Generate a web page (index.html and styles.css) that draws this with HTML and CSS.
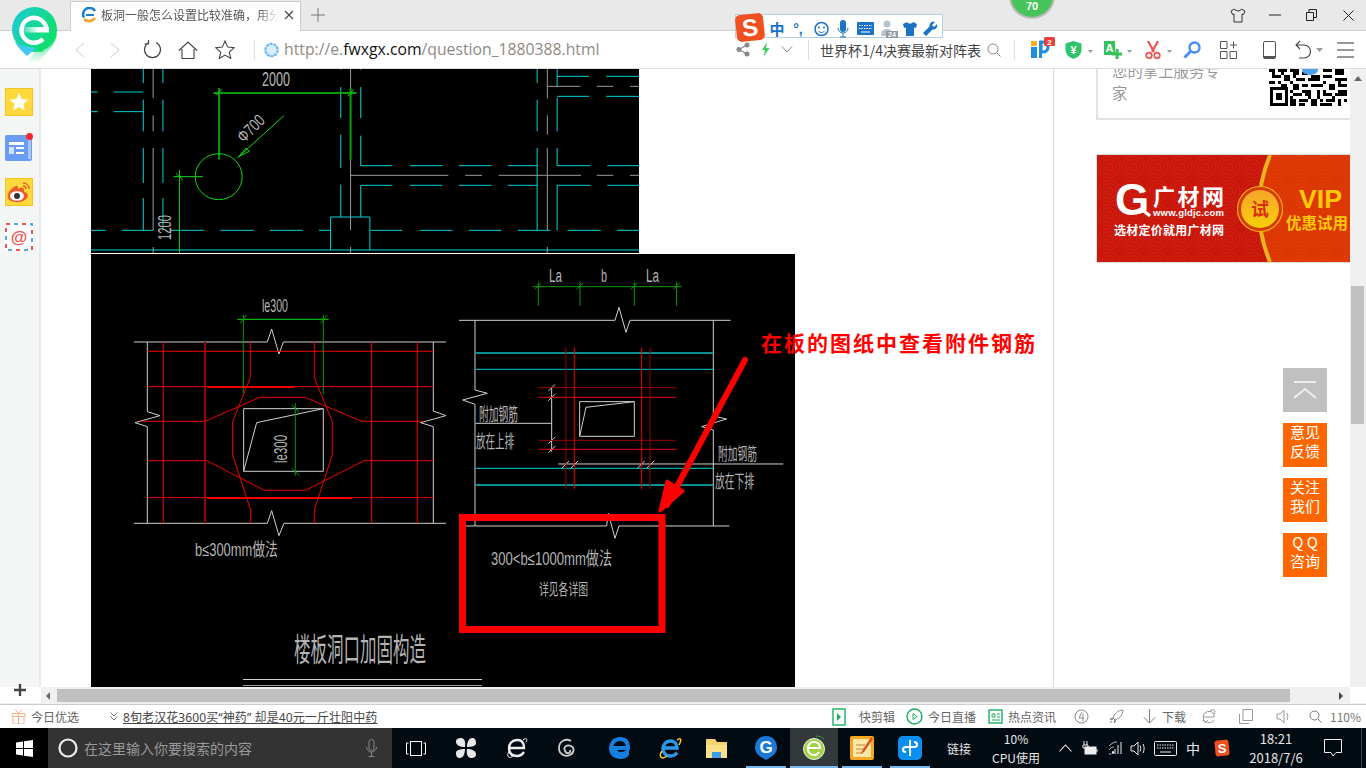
FILE: index.html
```html
<!DOCTYPE html>
<html lang="zh-CN">
<head>
<meta charset="utf-8">
<title>板洞一般怎么设置比较准确</title>
<link rel="stylesheet" href="styles.css">
</head>
<body>
<div class="browser">
  <header class="titlebar">
    <div class="tab">
      <svg class="favicon" width="16" height="16" viewBox="0 0 16 16"><path d="M3 10.500A6 6 0 0 1 14 4" fill="none" stroke="#1a7fd0" stroke-width="2.600"/><path d="M3 12c3 3 8 3 11-1" fill="none" stroke="#f0a030" stroke-width="2.600"/><path d="M5 8h8" stroke="#1a7fd0" stroke-width="2"/></svg>
      <span class="tab-title">板洞一般怎么设置比较准确，用分</span>
      <svg class="tab-close" width="10" height="10" viewBox="0 0 10 10"><path d="M1 1l8 8M9 1l-8 8" stroke="#444" stroke-width="1.100"/></svg>
    </div>
    <svg class="newtab" width="14" height="14" viewBox="0 0 14 14"><path d="M7 0v14M0 7h14" stroke="#777" stroke-width="1"/></svg>
    <div class="winctrls">
      <span class="wc"><svg width="16" height="15" viewBox="0 0 16 15"><path d="M4.500 1L1 3l1.500 3.500L4 6v8h8V6l1.500.5L15 3l-3.500-2c-1 2.500-6 2.500-7 0z" fill="none" stroke="#333"/></svg></span>
      <span class="wc"><svg width="12" height="2" viewBox="0 0 12 2"><path d="M0 1h12" stroke="#222"/></svg></span>
      <span class="wc"><svg width="11" height="12" viewBox="0 0 11 12"><path d="M.5 3.500h7v8h-7zM3 3.500V.5h7.500v8H7.500" fill="none" stroke="#222"/></svg></span>
      <span class="wc"><svg width="11" height="11" viewBox="0 0 11 11"><path d="M.5.500l10 10M10.500.5l-10 10" stroke="#222"/></svg></span>
    </div>
  </header>

  <nav class="toolbar">
    <span class="cell"><svg width="10" height="16" viewBox="0 0 10 16"><path d="M9 1L1 8l8 7" fill="none" stroke="#ccc"/></svg></span>
    <span class="cell"><svg width="10" height="16" viewBox="0 0 10 16"><path d="M1 1l8 7-8 7" fill="none" stroke="#ccc"/></svg></span>
    <span class="cell"><svg width="19" height="19" viewBox="0 0 19 19"><path d="M6 2.500a8 8 0 1 0 7 0M5.500 0v4h-4" fill="none" stroke="#444" stroke-width="1.200"/></svg></span>
    <span class="cell"><svg width="20" height="18" viewBox="0 0 20 18"><path d="M1 9.500L10 1l9 8.500M4 8v9.500h12V8" fill="none" stroke="#444" stroke-width="1.100"/></svg></span>
    <span class="cell"><svg width="20" height="19" viewBox="0 0 20 19"><path d="M10 1l2.700 6.100 6.600.6-5 4.400 1.500 6.400-5.800-3.400-5.800 3.400 1.500-6.400-5-4.400 6.600-.6z" fill="none" stroke="#444" stroke-width="1.100"/></svg></span>
    <span class="cell"><i class="sep"></i></span>
    <span class="cell"><svg width="15" height="16" viewBox="0 0 15 16"><circle cx="7.500" cy="8" r="6.200" fill="#d8eefb" stroke="#66b5ee" stroke-width="2" stroke-dasharray="3 .8"/></svg></span>
    <span class="url">http://e.<b class="url-host">fwxgx.com</b>/question_1880388.html</span>
    <span class="cell"><svg width="14" height="15" viewBox="0 0 14 15"><path d="M3 7.500L11 3M3 7.500l8 4.500" stroke="#888" stroke-width="1.200"/><circle cx="3" cy="7.500" r="2.500" fill="#888"/><circle cx="11" cy="3" r="2.500" fill="#888"/><circle cx="11" cy="12" r="2.500" fill="#888"/></svg></span>
    <span class="cell"><svg width="9" height="15" viewBox="0 0 9 15"><path d="M6 0L1 8h3l-1.500 7L8.500 6H5z" fill="#3ecf5e"/></svg></span>
    <span class="cell"><svg width="12" height="7" viewBox="0 0 12 7"><path d="M1 .5l5 5.500 5-5.500" fill="none" stroke="#888"/></svg></span>
    <span class="cell"><i class="sep"></i></span>
    <span class="search">世界杯1/4决赛最新对阵表</span>
    <span class="cell"><svg width="14" height="14" viewBox="0 0 14 14"><circle cx="6" cy="6" r="5" fill="none" stroke="#888"/><path d="M10 10l3.500 3.500" stroke="#888"/></svg></span>
    <span class="cell"><i class="sep"></i></span>
    <span class="cell cell-ip"><svg width="25" height="26" viewBox="0 0 25 26"><rect x="0" y="4" width="6" height="5" fill="#f3b01c"/><rect x="0" y="10" width="6" height="11" fill="#1e8fe0"/><path d="M10 5h2a5 5 0 0 1 0 10h-2z" fill="none" stroke="#1e8fe0" stroke-width="3.200"/><path d="M9.500 4v17" stroke="#1e8fe0" stroke-width="3"/><rect x="13" y="0" width="11" height="9" rx="1.500" fill="#e8413a"/><text x="18.500" y="7.800" class="badge-num">2</text></svg></span>
    <span class="cell cell-left cell-p11"><svg width="28" height="18" viewBox="0 0 28 18"><path d="M8.500 0l8 2.500V9c0 4.500-4 7.500-8 9-4-1.500-8-4.500-8-9V2.500z" fill="#2fc46c"/><text x="8.500" y="13" class="icon-num">¥</text><path d="M23 9h5l-2.500 3z" fill="#999"/></svg></span>
    <span class="cell cell-left cell-p12"><svg width="30" height="18" viewBox="0 0 30 18"><rect x="0" y="0" width="11" height="14" fill="#35c15e"/><text x="5.500" y="11" class="icon-num">A</text><path d="M13 8v10M8 13h10" stroke="#35c15e" stroke-width="3"/><path d="M23 9h5l-2.500 3z" fill="#999"/></svg></span>
    <span class="cell cell-left cell-p13"><svg width="29" height="18" viewBox="0 0 29 18"><path d="M3 0l6 11M13 0L7 11" stroke="#ef5350" stroke-width="2.200"/><circle cx="4" cy="14.500" r="2.800" fill="none" stroke="#ef5350" stroke-width="1.800"/><circle cx="12" cy="14.500" r="2.800" fill="none" stroke="#ef5350" stroke-width="1.800"/><path d="M22 9h5l-2.500 3z" fill="#999"/></svg></span>
    <span class="cell"><svg width="18" height="18" viewBox="0 0 18 18"><circle cx="11.500" cy="6.500" r="5" fill="none" stroke="#4a8ff0" stroke-width="2.400"/><path d="M7.500 10.500L1.500 16.500" stroke="#4a8ff0" stroke-width="3"/></svg></span>
    <span class="cell"><svg width="17" height="18" viewBox="0 0 17 18"><path d="M.5.500h6.500v7H.5zM.5 10.500h6.500v7H.5zM10 10.500h6.500v7H10zM13.500.5v7M10 4h7" fill="none" stroke="#555"/></svg></span>
    <span class="cell"><svg width="13" height="18" viewBox="0 0 13 18"><rect x=".5" y=".5" width="12" height="17" rx="1.500" fill="none" stroke="#555"/><path d="M1 15h11v2H1z" fill="#555"/></svg></span>
    <span class="cell"><svg width="16" height="20" viewBox="0 0 16 20"><path d="M5 1L1 5l4 4M1 5h8a6 6 0 0 1 0 13H4" fill="none" stroke="#444" stroke-width="1.100"/></svg></span>
    <span class="cell"><svg width="7" height="4" viewBox="0 0 7 4"><path d="M0 0h7L3.500 4z" fill="#999"/></svg></span>
    <span class="cell"><svg width="17" height="16" viewBox="0 0 17 16"><path d="M0 1h17M0 8h17M0 15h17" stroke="#333" stroke-width="1.200"/></svg></span>
  </nav>

  <div class="viewport">
    <aside class="sidebar">
      <div class="side-icons">
        <svg class="side-icon" width="28" height="28" viewBox="0 0 28 28"><rect x=".5" y=".5" width="27" height="27" fill="#ffd93b" stroke="#f9c320"/><path d="M14 5l2.800 6 6.500.7-4.900 4.300 1.400 6.400-5.800-3.300-5.800 3.300 1.400-6.400-4.900-4.300 6.500-.7z" fill="#fff"/></svg>
        <svg class="side-icon" width="28" height="28" viewBox="0 0 28 28"><rect y="2" width="27" height="26" rx="2" fill="#6a9cf5"/><rect x="23" y="4" width="3" height="22" fill="#a9c6fa"/><rect x="4" y="9" width="15" height="3" fill="#fff"/><rect x="4" y="14" width="5" height="7" fill="#d2e1fc"/><rect x="11" y="14" width="8" height="2" fill="#fff"/><rect x="11" y="19" width="8" height="2" fill="#fff"/><circle cx="24.500" cy="3.500" r="3.500" fill="#f7262c"/></svg>
        <svg class="side-icon" width="28" height="28" viewBox="0 0 28 28"><rect x=".5" y=".5" width="27" height="27" fill="#ffd93b" stroke="#f9c320"/><path d="M11 8C4 11 2 17 3 20c2 5 15 6 19 0 2-3 0-6-3-6 1-3-1-5-4-4l-2 1c0-2-.5-4-2-3z" fill="#ef5a2a"/><ellipse cx="12" cy="18" rx="7" ry="4.800" fill="#fff"/><circle cx="12" cy="18" r="3" fill="#333"/><path d="M18 5c4 0 6 3 6 6M18 8c2 0 3 1 3 3" fill="none" stroke="#ef5a2a" stroke-width="1.300"/></svg>
        <svg class="side-icon" width="28" height="28" viewBox="0 0 28 28"><rect width="28" height="28" fill="#fff"/><rect x="1" y="1" width="26" height="26" fill="none" stroke="#ef5350" stroke-width="2" stroke-dasharray="4 12"/><rect x="1" y="1" width="26" height="26" fill="none" stroke="#55a9ee" stroke-width="2" stroke-dasharray="4 12" stroke-dashoffset="8"/><text x="14" y="20" class="mail-at">@</text></svg>
      </div>
      <svg class="side-add" width="14" height="14" viewBox="0 0 14 14"><path d="M7 1v12M1 7h12" stroke="#444" stroke-width="2.400"/></svg>
    </aside>

    <main class="page">
      <section class="article">
        <svg class="drawing" width="548" height="184" viewBox="91 69 548 184">
          <g transform="translate(90 68) scale(.3507 .3333)">
            <path class="cy" d="M152 0V45M152 95V190M152 240V345M152 390V487M208 0V45M208 95V190M208 240V345M208 390V487M0 72H22M68 72H152M0 131H22M68 131H152M0 487H45M90 487H180M230 487H325M372 487H467M513 487H607M653 487H686M800 487H890M940 487H1033M1080 487H1173M1220 487H1313M1362 487H1456M1503 487H1568M715 0V5M715 57V150M715 200V300M715 350V447M772 0V5M772 57V150M772 203V293H862M772 447V352H862M912 293H1005M1052 293H1145M1192 293H1275M912 352H1005M1052 352H1145M1192 352H1275M1332 293H1427M1475 293H1568M1332 352H1427M1475 352H1568M686 546V447H798V546M1275 0V45M1275 95V190M1275 240V487M1332 0V55M1332 90V190M1332 240V293M1332 352V487M1332 25H1423M1472 25H1568M1332 85H1423M1472 85H1568M0 546H1568"/>
            <path class="gy" d="M180 0V90M180 142V190M180 240V487M180 537V555M743 0V487M743 537V555M743 322H1022M1070 322H1118M1165 322H1400M1445 322H1492M1540 322H1568M1304 0V92M1304 142V200M1304 240V487M1304 537V555M1304 55H1398M1445 55H1492M1540 55H1568"/>
            <path class="gd thick" d="M352 75H760M368 60V275M743 60V275"/>
            <path class="gn" d="M238 326H322M255 305V555M360 82L376 64M735 85L752 64M245 316L265 336M420 270L553 143M425 265L445 240L455 250Z"/>
            <ellipse class="gn" cx="367" cy="326" rx="67" ry="69"/>
          </g>
          <text class="cad" x="262" y="86" font-size="20" textLength="28" lengthAdjust="spacingAndGlyphs">2000</text>
          <text class="cad" x="235" y="134" font-size="17" textLength="31" lengthAdjust="spacingAndGlyphs" transform="rotate(-45 251 128)">Φ700</text>
          <text class="cad" x="152" y="233" font-size="18" textLength="25" lengthAdjust="spacingAndGlyphs" transform="rotate(-90 165 227)">1200</text>
        </svg>
        <svg class="drawing drawing-second" width="704" height="433" viewBox="91 254 704 433">
          <g transform="translate(90 255) scale(.3333)">
            <path class="wh" d="M132 261H532L545 222L567 297L580 261H1068M132 805H532L545 767L567 842L582 805H1068M172 261V470L210 482L135 503L172 515V805M1030 261V468L1068 482L992 503L1030 515V805M461 461H700V649H461Z"/>
            <path class="wh" d="M461 649L500 503L700 461"/>
            <path class="rd" d="M172 289H1030M172 395H1030M150 499H345L510 427H645L815 499H1000M172 617H350L523 706H647L823 617H1030M172 728H1030M220 261V805M845 261V805M982 261V805M481 261V368L428 500V600L482 765V805M673 261V368L727 500V600L673 765V805"/>
            <path class="rd thick" d="M352 396H613M352 729H785"/>
            <path class="rdk thick" d="M345 261V805"/>
            <path class="gn" d="M442 193H716"/>
            <path class="gd" d="M460 180V415M700 180V418M616 445V662M450 205L470 180M692 205L712 180M606 450L628 472M606 640L628 662"/>
          </g>
          <g transform="translate(450 255) scale(.3333)">
            <path class="wh" d="M27 196H495L507 157L528 232L540 196H842M75 196V405L112 415L38 435L75 448V813M790 196V483L830 492L755 515L790 525V813M27 813H470L475 775L495 850L507 813H838M389 440H553V544H389ZM389 544L408 457L553 440M305 395V590M77 505H305M325 627H1000M295 408L316 388M295 437L316 417M295 566L316 546M295 593L316 573M335 640L357 618M362 640L384 618M562 640L584 618M590 640L612 618"/>
            <path class="cydk thick" d="M77 294H790M77 690H790"/>
            <path class="cy" d="M77 343H790M77 640H790"/>
            <path class="rd" d="M373 277V703M575 277V703M265 427H678M265 583H680"/>
            <path class="rdk" d="M348 277V703M600 277V703M265 398H680M265 556H678"/>
            <path class="gd" d="M247 95H695M265 80V152M390 80V152M553 80V152M680 80V152M255 103L275 83M380 103L400 83M543 103L563 83M670 103L690 83"/>
          </g>
          <text class="cad" x="262" y="312" font-size="18" textLength="26" lengthAdjust="spacingAndGlyphs">le300</text>
          <text class="cad" x="267" y="455" font-size="18" textLength="28" lengthAdjust="spacingAndGlyphs" transform="rotate(-90 281 449)">le300</text>
          <text class="cad" x="549" y="282" font-size="18" textLength="13" lengthAdjust="spacingAndGlyphs">La</text>
          <text class="cad" x="601" y="282" font-size="18" textLength="6" lengthAdjust="spacingAndGlyphs">b</text>
          <text class="cad" x="646" y="282" font-size="18" textLength="13" lengthAdjust="spacingAndGlyphs">La</text>
          <text class="cad" x="479" y="421" font-size="18" textLength="39" lengthAdjust="spacingAndGlyphs">附加钢筋</text>
          <text class="cad" x="476" y="448" font-size="18" textLength="38" lengthAdjust="spacingAndGlyphs">放在上排</text>
          <text class="cad" x="718" y="460" font-size="17" textLength="39" lengthAdjust="spacingAndGlyphs">附加钢筋</text>
          <text class="cad" x="715" y="488" font-size="18" textLength="39" lengthAdjust="spacingAndGlyphs">放在下排</text>
          <text class="cad" x="195" y="556" font-size="18" textLength="83" lengthAdjust="spacingAndGlyphs">b≤300mm做法</text>
          <text class="cad" x="491" y="565" font-size="18" textLength="121" lengthAdjust="spacingAndGlyphs">300&lt;b≤1000mm做法</text>
          <text class="cad" x="539" y="595" font-size="16" textLength="49" lengthAdjust="spacingAndGlyphs">详见各详图</text>
          <text class="cad" x="294" y="661" font-size="32" textLength="132" lengthAdjust="spacingAndGlyphs">楼板洞口加固构造</text>
          <path class="wh" d="M243 679.500H482"/>
          <path class="gy" d="M243 685.500H482"/>
        </svg>
        <svg class="annotation" width="1012" height="618" viewBox="41 69 1012 618">
          <rect class="anno-box" x="462.500" y="517.500" width="199.500" height="112"/>
          <path class="anno-arrow" d="M745 360L667 505"/>
          <path class="anno-head" d="M667 481L660 511L683 491Z"/>
          <text class="anno-text" x="761" y="351" textLength="274">在板的图纸中查看附件钢筋</text>
        </svg>
      </section>

      <section class="rail">
        <div class="app-card">
          <p class="app-text">您的掌上服务专<br>家</p>
          <svg class="qr" width="80" height="37" viewBox="0 0 80 37">
            <path d="M1 18h18v19H1zM4 21v13h12V21zM7 24h6v7H7z" fill-rule="evenodd"/>
            <path d="M0 0h6v3H0zM9 0h9v3H9zM21 0h3v3h-3zM24 0h6v6h-6zM33 3h6v3h-6zM54 0h9v3h-9zM66 0h9v6h-9zM3 3h3v3H3zM12 3h3v3h-3zM3 6h9v3H3zM15 6h6v6h-6zM24 6h3v3h-3zM27 9h9v3h-9zM39 9h3v3h-3zM42 6h9v6h-9zM54 6h9v3h-9zM66 9h12v3H66zM0 12h6v3H0zM9 12h3v3H9zM12 15h6v3h-6zM21 12h3v3h-3zM24 15h6v6h-6zM33 15h6v3h-6zM42 15h3v3h-3zM45 15h9v3h-9zM54 12h3v3h-3zM60 15h6v6h-6zM72 15h6v3h-6zM69 12h3v6h-3zM21 21h3v3h-3zM33 21h3v3h-3zM24 24h9v3h-9zM36 21h6v6h-6zM48 21h3v6h-3zM54 21h3v3h-3zM54 24h9v3h-9zM66 24h3v3h-3zM69 21h9v6h-9zM21 27h3v3h-3zM21 30h6v7h-6zM30 30h9v3h-9zM42 30h6v7h-6zM51 30h3v3h-3zM57 30h9v3h-9zM69 30h3v7h-3zM75 30h3v3h-3zM30 34h6v3h-6zM51 34h12v3H51zM39 27h3v3h-3zM63 27h3v3h-3zM48 27h3v3h-3z"/>
            <ellipse cx="41" cy="1" rx="8" ry="5" fill="#4a9ff0"/>
          </svg>
        </div>
        <svg class="banner" width="254" height="109" viewBox="-1 -1 254 109">
          <defs>
            <pattern id="swirl" width="24" height="24" patternUnits="userSpaceOnUse">
              <g fill="none" stroke="#f0552a" stroke-opacity=".3" stroke-width=".7"><circle cx="12" cy="12" r="11"/><circle cx="12" cy="12" r="7.500"/><circle cx="12" cy="12" r="4"/></g>
            </pattern>
            <linearGradient id="coin" x1="0" y1="0" x2="0" y2="1"><stop offset="0" stop-color="#f7a52a"/><stop offset="1" stop-color="#f5d00a"/></linearGradient>
          </defs>
          <rect x="-.5" y="-.5" width="253.500" height="108" fill="#c8160b" stroke="#ddd"/>
          <rect width="253" height="107" fill="url(#swirl)"/>
          <path d="M173 0Q151 54 173 107H253V0Z" fill="#dc3700"/>
          <path d="M173 0Q151 54 173 107H253V0Z" fill="url(#swirl)"/>
          <path d="M173 0Q151 54 173 107" fill="none" stroke="#e8b51a" stroke-width="4"/>
          <text class="bn-g" x="18" y="60">G</text>
          <path d="M47 56l6 5" stroke="#fff" stroke-width="3.500"/>
          <text class="bn-title" x="56" y="50" textLength="71" lengthAdjust="spacing">广材网</text>
          <text class="bn-url" x="56" y="61" textLength="71">www.gldjc.com</text>
          <text class="bn-slogan" x="17" y="80" textLength="110" lengthAdjust="spacing">选材定价就用广材网</text>
          <circle cx="163" cy="54" r="22.500" fill="#d63a08" stroke="#eeb418" stroke-width="1.200"/>
          <circle cx="163" cy="54" r="19" fill="url(#coin)"/>
          <text class="bn-try" x="163" y="60.500">试</text>
          <text class="bn-vip" x="202" y="53" textLength="43" lengthAdjust="spacingAndGlyphs">VIP</text>
          <text class="bn-offer" x="189" y="74">优惠试用</text>
        </svg>
      </section>

      <div class="floaters">
        <a class="float float-top"><svg width="24" height="18" viewBox="0 0 24 18"><path d="M1 1h22M1 17l11-9 11 9" fill="none" stroke="#eee" stroke-width="2"/></svg></a>
        <a class="float">意见<br>反馈</a>
        <a class="float">关注<br>我们</a>
        <a class="float">Q Q<br>咨询</a>
      </div>
    </main>

    <div class="vscroll">
      <svg class="vs-arrow" width="8" height="5" viewBox="0 0 8 5"><path d="M0 5h8L4 0z" fill="#666"/></svg>
      <i class="vs-thumb"></i>
    </div>
  </div>

  <div class="hscroll">
    <svg class="hs-arrow" width="4" height="8" viewBox="0 0 4 8"><path d="M4 0v8L0 4z" fill="#666"/></svg>
    <i class="hs-thumb"></i>
    <svg class="hs-arrow" width="4" height="8" viewBox="0 0 4 8"><path d="M0 0v8l4-4z" fill="#444"/></svg>
  </div>

  <footer class="status">
    <span class="cell"><svg width="15" height="15" viewBox="0 0 15 15"><path d="M1 4.500h13v3H1zM2 7.500h11V15H2zM7.500 4.500V15M7.500 4.500L4 .5M7.500 4.500L11 .5" fill="none" stroke="#f5b08c"/></svg></span>
    <span class="st-text st-pad">今日优选</span>
    <span class="cell"><svg width="8" height="9" viewBox="0 0 8 9"><path d="M.5.500L4 4l3.500-3.500M.5 4.500L4 8l3.500-3.500" fill="none" stroke="#777"/></svg></span>
    <span class="st-link-cell"><a class="st-link">8旬老汉花3600买“神药” 却是40元一斤壮阳中药</a></span>
    <span class="cell"><svg width="14" height="18" viewBox="0 0 14 18"><rect x="1" y="1" width="12" height="16" fill="none" stroke="#18b060" stroke-width="1.400"/><path d="M5 5l4 4-4 4z" fill="#18b060"/></svg></span>
    <span class="st-text st-pad-lg">快剪辑</span>
    <span class="cell"><svg width="17" height="17" viewBox="0 0 17 17"><circle cx="8.500" cy="8.500" r="7.500" fill="none" stroke="#18b060" stroke-width="1.400"/><path d="M7 5.500l4 3-4 3z" fill="none" stroke="#18b060"/></svg></span>
    <span class="st-text">今日直播</span>
    <span class="cell"><svg width="15" height="15" viewBox="0 0 15 15"><rect x="1" y="1" width="13" height="13" fill="none" stroke="#18b060" stroke-width="1.400"/><path d="M4 5h3v3H4zM9 5h3M9 8h3M4 11h8" fill="none" stroke="#18b060"/></svg></span>
    <span class="st-text">热点资讯</span>
    <span class="cell"><svg width="15" height="15" viewBox="0 0 15 15"><circle cx="7.500" cy="7.500" r="6.500" fill="none" stroke="#888"/><path d="M8 3L5 9h5M9 5v7" fill="none" stroke="#888"/></svg></span>
    <span class="cell"><svg width="15" height="15" viewBox="0 0 15 15"><path d="M14 1C9 1 5 5 4 9l2 2c4-1 8-5 8-10zM4 9l-3 1 2 1zM6 11l-1 3 2-2zM3 12l-2 2" fill="none" stroke="#888"/></svg></span>
    <span class="cell"><svg width="13" height="15" viewBox="0 0 13 15"><path d="M6.500 0v14M1 8.500l5.500 5.500L12 8.500" fill="none" stroke="#777"/></svg></span>
    <span class="st-text">下载</span>
    <span class="cell"><svg width="14" height="15" viewBox="0 0 14 15"><path d="M1 8a6 6 0 0 1 11-3v3H1M12 11a6 6 0 0 1-10 0M2 8c-2 6 1 7 4 3M8 2c5-3 6 0 4 3" fill="none" stroke="#999"/></svg></span>
    <span class="cell"><svg width="14" height="15" viewBox="0 0 14 15"><path d="M4 .5h9.500v11H4zM.5 5v9.500H10" fill="none" stroke="#999"/></svg></span>
    <span class="cell"><svg width="15" height="15" viewBox="0 0 15 15"><path d="M1 5h3l4-4v13l-4-4H1zM11 4c1 2 1 5 0 7" fill="none" stroke="#999"/></svg></span>
    <span class="cell"><svg width="13" height="13" viewBox="0 0 13 13"><circle cx="5.500" cy="5.500" r="4.500" fill="none" stroke="#777"/><path d="M9 9l3.500 3.500" stroke="#777"/></svg></span>
    <span class="st-text st-zoom">110%</span>
  </footer>

  <footer class="taskbar">
    <span class="start"><svg width="17" height="17" viewBox="0 0 17 17"><path d="M0 2.500L7 1.500V8H0zM8 1.300L17 0v8H8zM0 9h7v6.500L0 14.500zM8 9h9v8L8 15.700z" fill="#fff"/></svg></span>
    <div class="tb-search">
      <svg width="20" height="22" viewBox="0 0 20 22"><circle cx="10" cy="11" r="8.500" fill="none" stroke="#eee" stroke-width="2.200"/></svg>
      <span class="tb-placeholder">在这里输入你要搜索的内容</span>
      <svg class="tb-mic" width="11" height="18" viewBox="0 0 11 18"><rect x="3" y=".5" width="5" height="11" rx="2.500" fill="none" stroke="#888"/><path d="M.5 8a5 5 0 0 0 10 0M5.500 13v4M2.500 17.500h6" fill="none" stroke="#888"/></svg>
    </div>
    <span class="app"><svg width="20" height="15" viewBox="0 0 20 15"><rect x="4.500" y=".5" width="11" height="14" fill="none" stroke="#fff"/><path d="M2.500 2H.5v11h2M17.500 2h2v11h-2" fill="none" stroke="#fff"/></svg></span>
    <span class="app"><svg width="22" height="22" viewBox="0 0 22 22"><path d="M10 10C5 10 1 8 1 5s2-4 5-4 5 3 4 9zM12 10c0-5 2-9 5-9s4 2 4 5-4 4-9 4zM12 12c5 0 9 2 9 5s-2 4-5 4-5-4-4-9zM10 12c0 5-2 9-5 9s-4-2-4-5 4-4 9-4z" fill="#e8e8e8"/></svg></span>
    <span class="app"><svg width="22" height="24" viewBox="0 0 22 24"><path d="M4 12h14c0-6-3-8-7-8-5 0-8 4-8 8 0 5 3 8 8 8 3 0 5-1 7-4" fill="none" stroke="#eee" stroke-width="2.400"/><path d="M17 4c3-3 5-1 3 2M3 15c-3 6 0 8 4 5" fill="none" stroke="#eee"/></svg></span>
    <span class="app"><svg width="20" height="20" viewBox="0 0 20 20"><path d="M14 3C9 0 2 3 2 10s7 9 11 7 5-7 1-9-8 1-6 5 6 2 5-1" fill="none" stroke="#ccc" stroke-width="1.800"/></svg></span>
    <span class="app"><svg width="22" height="22" viewBox="0 0 22 22"><path d="M4 11h15c0-6-3-9-8-9-6 0-9 5-9 9 0 6 4 9 9 9 3 0 6-1 7-3v-2c-2 2-4 2-6 2-3 0-6-2-6-5z" fill="none" stroke="#1580e0" stroke-width="4"/></svg></span>
    <span class="app"><svg width="24" height="24" viewBox="0 0 24 24"><path d="M6 12h13c0-5-3-7-6.500-7C8 5 5 9 5 12.500 5 17 8 20 12.500 20c3 0 5-1 6.500-3.500" fill="none" stroke="#2a9ae8" stroke-width="3.400"/><path d="M19 4c4-3 5 0 2 5M4 15c-4 6 0 9 5 5" fill="none" stroke="#f2c52a" stroke-width="1.600"/></svg></span>
    <span class="app"><svg width="22" height="20" viewBox="0 0 22 20"><path d="M0 1h9l2 3h10v16H0z" fill="#f5d36e"/><path d="M0 7h21v13H0z" fill="#fbe08a"/><path d="M6 14h9v6H6z" fill="#3aa0e8"/></svg></span>
    <span class="app run"><svg width="24" height="26" viewBox="0 0 24 26"><path d="M12 1c7 0 11 5 11 12 0 4-3 7-6 9l-5 3-5-3c-3-2-6-5-6-9C1 6 5 1 12 1z" fill="#1a78d8"/><text x="12" y="18" class="g-num">G</text></svg></span>
    <span class="app run active"><svg width="24" height="26" viewBox="0 0 24 26"><circle cx="12" cy="14" r="10.500" fill="#9ed240" stroke="#eee"/><path d="M5 13h13c0-4-2-6-6-6s-6 3-6 7c0 4 3 6 6 6 2 0 4-1 5-3" fill="none" stroke="#fff" stroke-width="2.200"/><path d="M14 1c3 0 6 1 8 3" fill="none" stroke="#3a9a3a"/></svg></span>
    <span class="app run"><svg width="24" height="24" viewBox="0 0 24 24"><rect width="24" height="24" rx="2" fill="#f6a821"/><rect x="3" y="3" width="18" height="18" fill="#fde7a6"/><path d="M6 9h9M6 13h9M6 17h7" stroke="#b58a3a"/><path d="M21 1L12 15l-1 3 3-2L23 3z" fill="#d9541e"/></svg></span>
    <span class="app run"><svg width="24" height="24" viewBox="0 0 24 24"><rect width="24" height="24" rx="5" fill="#0a8ff0"/><path d="M12 4v16M8 11h8M8 11c-4 0-4 5 0 5M16 11c4 0 4-5 0-5" fill="none" stroke="#fff" stroke-width="2"/></svg></span>
    <span class="tb-text">链接</span>
    <span class="tb-text tb-stack"><span>10%</span><span>CPU使用</span></span>
    <span class="cell"><svg width="13" height="8" viewBox="0 0 13 8"><path d="M.5 7.500l6-6.500 6 6.500" fill="none" stroke="#eee" stroke-width="1.100"/></svg></span>
    <span class="cell"><svg width="16" height="15" viewBox="0 0 16 15"><path d="M2 0v4M5 0v4M1 4h5v3H1zM3.500 7v3" stroke="#eee" fill="none"/><rect x="3" y="6" width="11" height="7" fill="#eee" stroke="#eee"/><path d="M15 8v3" stroke="#eee"/></svg></span>
    <span class="cell"><svg width="14" height="14" viewBox="0 0 14 14"><path d="M1 9c1-2 3-3 5-3M1 5c3-3 5-4 8-4M1 13h2" fill="none" stroke="#bbb"/><path d="M4 13l1-3 1 3M7 13V8M10 13V4M13 13V1" stroke="#eee" fill="none"/></svg></span>
    <span class="cell"><svg width="16" height="15" viewBox="0 0 16 15"><path d="M1 5h3l4-4v13l-4-4H1zM10 4.500c1 2 1 4 0 6M13 3c1.500 3 1.500 6 0 9" fill="none" stroke="#eee"/></svg></span>
    <span class="cell"><svg width="23" height="15" viewBox="0 0 23 15"><rect x=".5" y=".5" width="22" height="14" rx="1" fill="none" stroke="#eee"/><path d="M3 4h17M3 7h17" stroke="#eee" stroke-dasharray="1.500 1"/><path d="M6 11h11" stroke="#eee"/></svg></span>
    <span class="tb-text tb-ime">中</span>
    <span class="cell"><svg width="16" height="18" viewBox="0 0 16 18"><rect x="1" y="1" width="14" height="16" rx="3" fill="#f0501f" transform="rotate(-6 8 9)"/><text x="8" y="14" class="s-num">S</text></svg></span>
    <span class="tb-text tb-stack tb-clock"><span>18:21</span><span>2018/7/6</span></span>
    <span class="cell"><svg width="18" height="18" viewBox="0 0 18 18"><path d="M.5.500h17v13H12L9 17l-2-3.500H.5z" fill="none" stroke="#eee"/></svg></span>
    <i class="desk-line"></i>
  </footer>
</div>

<svg class="logo" width="46" height="56" viewBox="0 0 46 56">
  <defs>
    <linearGradient id="lg" x1="0" y1="0" x2="1" y2=".5"><stop offset="0" stop-color="#1fc9d8"/><stop offset="1" stop-color="#0fe06e"/></linearGradient>
    <linearGradient id="lt" x1="0" y1="0" x2="0" y2="1"><stop offset="0" stop-color="#10dc70"/><stop offset="1" stop-color="#10dc70" stop-opacity="0"/></linearGradient>
    <linearGradient id="lb" x1="0" y1="0" x2="1" y2="0"><stop offset="0" stop-color="#fff" stop-opacity=".15"/><stop offset=".6" stop-color="#fff"/></linearGradient>
  </defs>
  <path d="M45 26C42 36 30 40 24 44L14 56H26C32 46 44 40 45 26z" fill="url(#lt)"/>
  <circle cx="22.500" cy="22.500" r="22.500" fill="url(#lg)"/>
  <path d="M3 35c3 6 8 10 12 14l9-8c-8-1-15-2-21-6z" fill="#3fc8f0"/>
  <path d="M24 41c6-2 12-6 17-10l-11 14-6-1z" fill="#10dc70"/>
  <path d="M34.500 22.500A12.500 12.500 0 1 0 31 32" fill="none" stroke="#fff" stroke-width="4.400"/>
  <rect x="11" y="20" width="26" height="5.500" fill="url(#lb)"/>
</svg>

<div class="ball"><span>70</span></div>

<div class="ime">
  <span class="ime-s"><b>S</b></span>
  <span class="ime-cell ime-zh">中</span>
  <span class="ime-cell ime-punc">°,</span>
  <span class="ime-cell"><svg width="15" height="16" viewBox="0 0 15 16"><circle cx="7.500" cy="8" r="6.500" fill="none" stroke="#1a73c5" stroke-width="1.500"/><circle cx="5" cy="6.500" r="1" fill="#1a73c5"/><circle cx="10" cy="6.500" r="1" fill="#1a73c5"/><path d="M4.500 10c1.500 2 4.500 2 6 0" fill="none" stroke="#1a73c5"/></svg></span>
  <span class="ime-cell"><svg width="12" height="18" viewBox="0 0 12 18"><rect x="3" y="0" width="6" height="12" rx="3" fill="#1a73c5"/><path d="M1 8a5 5 0 0 0 10 0M6 13v4M3 17h6" fill="none" stroke="#1a73c5"/></svg></span>
  <span class="ime-cell"><svg width="17" height="13" viewBox="0 0 17 13"><rect width="17" height="13" rx="1" fill="#1a73c5"/><path d="M2 3.500h13M2 6.500h13" stroke="#fff" stroke-dasharray="1.500 1"/><path d="M4 10h9" stroke="#fff"/></svg></span>
  <span class="ime-cell"><svg width="18" height="18" viewBox="0 0 18 18"><circle cx="7" cy="4" r="3.500" fill="#b9c4cc"/><path d="M1 16c0-5 2-7 6-7s6 2 6 7z" fill="#b9c4cc"/><rect x="6" y="11" width="12" height="7" fill="#8e9aa3"/><text x="12" y="17" class="ime-24">24</text></svg></span>
  <span class="ime-cell"><svg width="14" height="14" viewBox="0 0 14 14"><path d="M4 0L0 2l1 4 2-.5V14h8V5.500l2 .5 1-4-4-2c-1 2-5 2-6 0z" fill="#1a73c5"/></svg></span>
  <span class="ime-cell"><svg width="15" height="15" viewBox="0 0 15 15"><path d="M14 3l-3 3-2-2 3-3c-3-1-6 1-5.500 4.500L0 12l3 3 6.500-6.500C13 9 15 6 14 3z" fill="#1a73c5"/></svg></span>
</div>
</body>
</html>
```
FILE: styles.css
```css
* { box-sizing: border-box; }
html, body { margin: 0; padding: 0; height: 100%; overflow: hidden; }
body { font-family: "Noto Sans CJK SC", "Noto Sans", sans-serif; background: #fff; color: #444; position: relative; }
svg { display: block; flex: none; }
a { color: inherit; }

.browser { width: 1366px; height: 768px; display: flex; flex-direction: column; }

/* title bar */
.titlebar { height: 31px; flex: none; display: flex; background: #e9e9e9; border-bottom: 1px solid #ccc; padding-left: 70px; }
.tab { width: 231px; height: 30px; margin-top: 1px; background: #fff; border: 1px solid #ccc; border-bottom: 0; display: flex; align-items: center; padding: 0 0 3px 10px; }
.tab-title { width: 178px; margin-left: 4px; font-size: 12px; line-height: 16px; color: #555; white-space: nowrap; overflow: hidden; -webkit-mask-image: linear-gradient(90deg, #000 88%, transparent); mask-image: linear-gradient(90deg, #000 88%, transparent); }
.tab-close { margin-left: 5px; }
.newtab { margin: 8px 0 0 10px; }
.winctrls { margin-left: auto; display: grid; grid-template-columns: 36px 37px 37px 36px; }
.wc { display: flex; align-items: center; justify-content: center; height: 30px; }

/* toolbar */
.toolbar { height: 38px; flex: none; background: #fff; border-bottom: 1px solid #ddd; padding-left: 62px; display: grid; align-items: center;
  grid-template-columns: 36px 34px 40px 32px 42px 16px 18px 450px 26px 18px 26px 16px 170px 16px 24px 28px 38px 40px 42px 36px 36px 46px 22px 10px 42px; }
.cell { display: flex; align-items: center; justify-content: center; min-width: 0; }
.cell-left { justify-content: flex-start; }
.cell-ip { justify-content: flex-start; padding-left: 5px; }
.cell-p11 { padding-left: 11px; }
.cell-p12 { padding-left: 12px; }
.cell-p13 { padding-left: 13px; }
.sep { display: block; width: 1px; height: 20px; background: #ddd; }
.url { padding-left: 4px; margin-top: -2px; font-family: "Open Sans", "Noto Sans", sans-serif; font-size: 15.750px; line-height: 20px; color: #8f8a84; white-space: nowrap; }
.url-host { font-weight: 400; color: #111; }
.search { padding-left: 4px; font-size: 14px; line-height: 20px; color: #444; white-space: nowrap; }
.badge-num { font: 700 8px "Liberation Sans", sans-serif; fill: #fff; text-anchor: middle; }
.icon-num { font: 700 11px "Liberation Sans", sans-serif; fill: #fff; text-anchor: middle; }

/* main */
.viewport { flex: 1; min-height: 0; display: flex; }
.sidebar { width: 41px; flex: none; background: #f4f5f5; border-right: 2px solid #e9eaea; display: flex; flex-direction: column; padding: 19px 0 0 5px; }
.side-icons { display: flex; flex-direction: column; gap: 17px; }
.side-add { margin: auto 0 -10px 8px; position: relative; }
.page { width: 1309px; flex: none; display: flex; position: relative; overflow: hidden; }
.article { width: 1013px; flex: none; padding-left: 50px; border-right: 1px solid #ddd; position: relative; }
.drawing { background: #000; }
.drawing-second { margin-top: 1px; }
.annotation { position: absolute; left: 0; top: 0; overflow: visible; }
.anno-box { fill: none; stroke: #f00; stroke-width: 7; }
.anno-arrow { stroke: #f00; stroke-width: 6; stroke-linecap: round; }
.anno-head { fill: #f00; stroke: #f00; stroke-width: 3; stroke-linejoin: round; }
.anno-text { font-size: 21px; fill: #f00; font-weight: 700; }

.cy, .gy, .gd, .gn, .wh, .rd, .rdk, .cydk { fill: none; stroke-width: 1; vector-effect: non-scaling-stroke; }
.cy { stroke: #00d2d8; }
.cydk { stroke: #0a8f90; }
.gy { stroke: #999; }
.wh { stroke: #d0d0d0; }
.gd { stroke: #0a9a0a; }
.gn { stroke: #10d810; }
.rd { stroke: #f00000; }
.rdk { stroke: #990000; }
.thick { stroke-width: 2; }
.cad { fill: #b4b4b4; font-family: "Liberation Sans", "Noto Sans CJK SC", sans-serif; font-weight: 400; }

/* right rail */
.rail { flex: 1; min-width: 0; padding-left: 42px; }
.app-card { height: 51px; border: 2px solid #e2e2e2; border-width: 0 0 2px 2px; display: flex; justify-content: space-between; overflow: hidden; }
.app-text { margin: -10px 0 0 14px; font-size: 15.400px; line-height: 22px; color: #999; }
.qr { margin-right: 1px; }
.banner { margin-top: 34px; }
.bn-g { font: 700 44px "Liberation Sans", sans-serif; fill: #fff; }
.bn-title { font: 700 22px "Noto Sans CJK SC", sans-serif; fill: #fff; }
.bn-url { font: 700 9.500px "Liberation Sans", sans-serif; fill: #fff; }
.bn-slogan { font: 700 12px "Noto Sans CJK SC", sans-serif; fill: #fff; }
.bn-try { font: 700 18px "Noto Sans CJK SC", sans-serif; fill: #d8300a; text-anchor: middle; }
.bn-vip { font: 700 25px "Liberation Sans", sans-serif; fill: #ffc90a; }
.bn-offer { font: 700 15.500px "Noto Sans CJK SC", sans-serif; fill: #ffc90a; }

.floaters { position: absolute; left: 1242px; top: 299px; display: flex; flex-direction: column; gap: 11px; }
.float { width: 44px; height: 44px; background: #ff6600; color: #fff; font-size: 15px; line-height: 18.500px; text-align: center; padding-top: 0; }
.float-top { background: #c0c0c0; display: flex; align-items: center; justify-content: center; padding: 0; }

/* scrollbars */
.vscroll { width: 16px; flex: none; background: #f0f0f0; position: relative; }
.vs-arrow { position: absolute; left: 4px; top: 7px; }
.vs-thumb { position: absolute; left: 1px; right: 2px; top: 217px; height: 138px; background: #c0c0c0; }
.hscroll { height: 17px; flex: none; margin-left: 41px; width: 1309px; background: #f0f0f0; display: flex; align-items: center; }
.hs-arrow { flex: none; margin: 0 6px; }
.hs-thumb { display: block; flex: none; width: 1233px; height: 13px; margin-left: 0; background: #c0c0c0; }
.hs-arrow:first-child { margin-left: 5px; margin-right: 7px; }
.hs-arrow:last-child { margin-left: 49px; }

/* status bar */
.status { height: 24px; flex: none; background: #fff; border-top: 1px solid #ccc; padding-left: 8px; display: grid; align-items: center; box-shadow: 0 -1px 0 #f0f0f0;
  grid-template-columns: 20px 78px 15px 710px 15px 54px 28px 54px 26px 58px 30px 40px 26px 30px 34px 40px 34px 30px 36px; }
.st-text { font-size: 12px; line-height: 16px; color: #666; white-space: nowrap; }
.st-pad { padding-left: 3px; }
.st-pad-lg { padding-left: 13px; }
.st-zoom { color: #777; }
.st-link-cell { display: block; padding-left: 2px; height: 16px; font-size: 12px; line-height: 16px; }
.st-link { font-family: "Noto Sans", "Noto Sans CJK SC", sans-serif; font-size: 12px; line-height: 16px; color: #444; text-decoration: underline; white-space: nowrap; letter-spacing: .1px; }

/* task bar */
.taskbar { height: 40px; flex: none; background: #020b12; display: grid; align-items: stretch; position: relative;
  grid-template-columns: 48px 344px 48px 52px 50px 50px 56px 44px 50px 48px 48px 48px 48px 50px 64px 34px 16px 34px 12px 42px 14px 44px 64px 50px 8px; }
.start { background: #000; display: flex; align-items: center; justify-content: center; }
.tb-search { background: #333; display: flex; align-items: center; padding-left: 10px; }
.tb-placeholder { margin-left: 6px; font-size: 14px; color: #999; white-space: nowrap; }
.tb-mic { margin-left: auto; margin-right: 15px; }
.app { display: flex; align-items: center; justify-content: center; position: relative; }
.run::after { content: ""; position: absolute; left: 4px; right: 4px; bottom: 0; height: 2px; background: #76b9ed; }
.active { background: #33383b; }
.active::after { left: 0; right: 0; }
.tb-text { display: flex; align-items: center; justify-content: center; font-size: 12px; color: #e6e6e6; white-space: nowrap; }
.tb-stack { flex-direction: column; line-height: 19px; }
.tb-clock { font-size: 13px; }
.tb-ime { font-size: 14px; }
.desk-line { position: absolute; right: 4px; top: 0; bottom: 0; width: 1px; background: #3a4248; }
.g-num { font: 700 17px "Liberation Sans", sans-serif; fill: #fff; text-anchor: middle; }
.s-num { font: 700 13px "Liberation Sans", sans-serif; fill: #fff; text-anchor: middle; }
.taskbar .cell { min-width: 0; }
.mail-at { font: 700 17px "Liberation Sans", sans-serif; fill: #ef5350; text-anchor: middle; }

/* overlays that sit across the window chrome */
.logo { position: absolute; left: 12px; top: 7px; }
.ball { position: absolute; left: 1009px; top: -27px; width: 46px; height: 46px; border-radius: 50%; background: #46c35a; border: 2px solid #bbb; display: flex; align-items: flex-end; justify-content: center; padding-bottom: 5px; font: 700 11px "Liberation Sans", sans-serif; color: #fff; }
.ime { position: absolute; left: 735px; top: 14px; width: 208px; height: 24px; background: #fff; border: 1px solid #b7cfe2; display: grid; align-items: center; grid-template-columns: 32px 18px 24px 22px 22px 22px 26px 15px 26px; }
.ime-s { position: relative; top: -1px; width: 28px; height: 27px; border-radius: 5px; background: #f0501f; color: #fff; font: 700 24px/27px "Liberation Sans", sans-serif; text-align: center; transform: rotate(-6deg); }
.ime-cell { display: flex; align-items: center; justify-content: center; color: #1a73c5; }
.ime-zh { font-size: 15px; font-weight: 700; line-height: 18px; }
.ime-punc { font: 700 14px/18px "Liberation Sans", sans-serif; }
.ime-24 { font: 700 7px "Liberation Sans", sans-serif; fill: #fff; text-anchor: middle; }
```
